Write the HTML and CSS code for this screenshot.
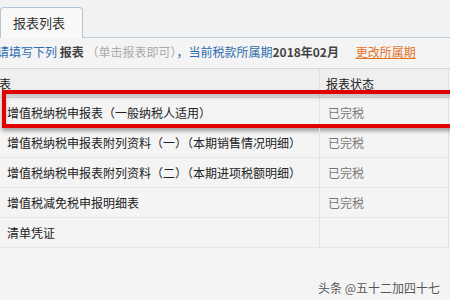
FILE: index.html
```html
<!DOCTYPE html>
<html lang="zh">
<head>
    <meta charset="UTF-8">
    <title>报表列表</title>
    <link rel="stylesheet" href="styles.css">
</head>
<body>
<div class="page">
    <div class="tabs">
        <div class="tab">报表列表</div>
    </div>

    <div class="info">
        <span class="blue">请填写下列</span>
        <b class="dark">报表</b>
        <span class="hint">（单击报表即可）</span><span class="blue">，当前税款所属期</span><b class="dark">2018年02月</b>
        <a class="change" href="#">更改所属期</a>
    </div>

    <div class="report-table">
        <div class="row head">
            <div class="cell name">表</div>
            <div class="cell status">报表状态</div>
        </div>
        <div class="row">
            <div class="cell name">增值税纳税申报表（一般纳税人适用）</div>
            <div class="cell status">已完税</div>
            <div class="mark"></div>
        </div>
        <div class="row">
            <div class="cell name">增值税纳税申报表附列资料（一）（本期销售情况明细）</div>
            <div class="cell status">已完税</div>
        </div>
        <div class="row">
            <div class="cell name">增值税纳税申报表附列资料（二）（本期进项税额明细）</div>
            <div class="cell status">已完税</div>
        </div>
        <div class="row">
            <div class="cell name">增值税减免税申报明细表</div>
            <div class="cell status">已完税</div>
        </div>
        <div class="row">
            <div class="cell name">清单凭证</div>
            <div class="cell status"></div>
        </div>
    </div>

    <div class="watermark">头条 @五十二加四十七</div>
</div>
</body>
</html>
```

FILE: styles.css
```css
/* 报表列表页面 */
body {
    margin: 0;
    background-color: #f4f4f4;
    font-family: "Noto Sans CJK SC", "Microsoft YaHei", sans-serif;
    font-size: 12px;
    color: #222;
}
.page {
    width: 450px;
    height: 300px;
    overflow: hidden;
    position: relative;
}
.tabs {
    height: 37px;
    display: flex;
    align-items: flex-end;
    border-bottom: 1px solid #bccbd8;
    background-color: #f2f2f2;
}
.tab {
    width: 83px;
    height: 31px;
    margin-bottom: -1px;
    box-sizing: border-box;
    border: 1px solid #b3c4d4;
    border-bottom: none;
    border-radius: 4px 4px 0 0;
    background-color: #f8f8f8;
    line-height: 30px;
    text-indent: 12px;
    font-size: 13px;
    color: #333;
}
.info {
    height: 30px;
    line-height: 28px;
    margin-left: -3px;
    border-bottom: 1px solid #d6d6d6;
    white-space: nowrap;
    color: #555;
}
.blue {
    color: #2c6cb0;
}
.dark {
    color: #444;
}
.hint {
    color: #aaa;
}
.change {
    margin-left: 14px;
    color: #e4731f;
    text-decoration: underline;
}
.report-table {
    width: 448px;
    border-right: 1px solid #e4e4e4;
}
.row {
    position: relative;
    display: grid;
    grid-template-columns: 320px 1fr;
    height: 29px;
    border-bottom: 1px solid #e6e6e6;
    white-space: nowrap;
}
.row.head {
    height: 28px;
    background-color: #efefef;
    border-bottom-color: #dcdcdc;
}
.cell {
    line-height: 30px;
    overflow: hidden;
}
.name {
    padding-left: 7px;
    border-right: 1px solid #e2e2e2;
}
.head .name {
    padding-left: 0;
    margin-left: -1px;
}
.status {
    padding-left: 8px;
    color: #777;
}
.head .status {
    padding-left: 6px;
    color: #222;
}
.mark {
    position: absolute;
    top: -8px;
    left: 2px;
    right: -20px;
    height: 38px;
    box-sizing: border-box;
    border: 4px solid #e00000;
    box-shadow: 0 3px 4px rgba(0, 0, 0, 0.35), inset 0 3px 4px rgba(0, 0, 0, 0.2);
}
.watermark {
    position: absolute;
    right: 10px;
    bottom: 4px;
    color: #555;
    font-size: 12px;
    text-shadow: 0 0 2px #fff;
}
```
